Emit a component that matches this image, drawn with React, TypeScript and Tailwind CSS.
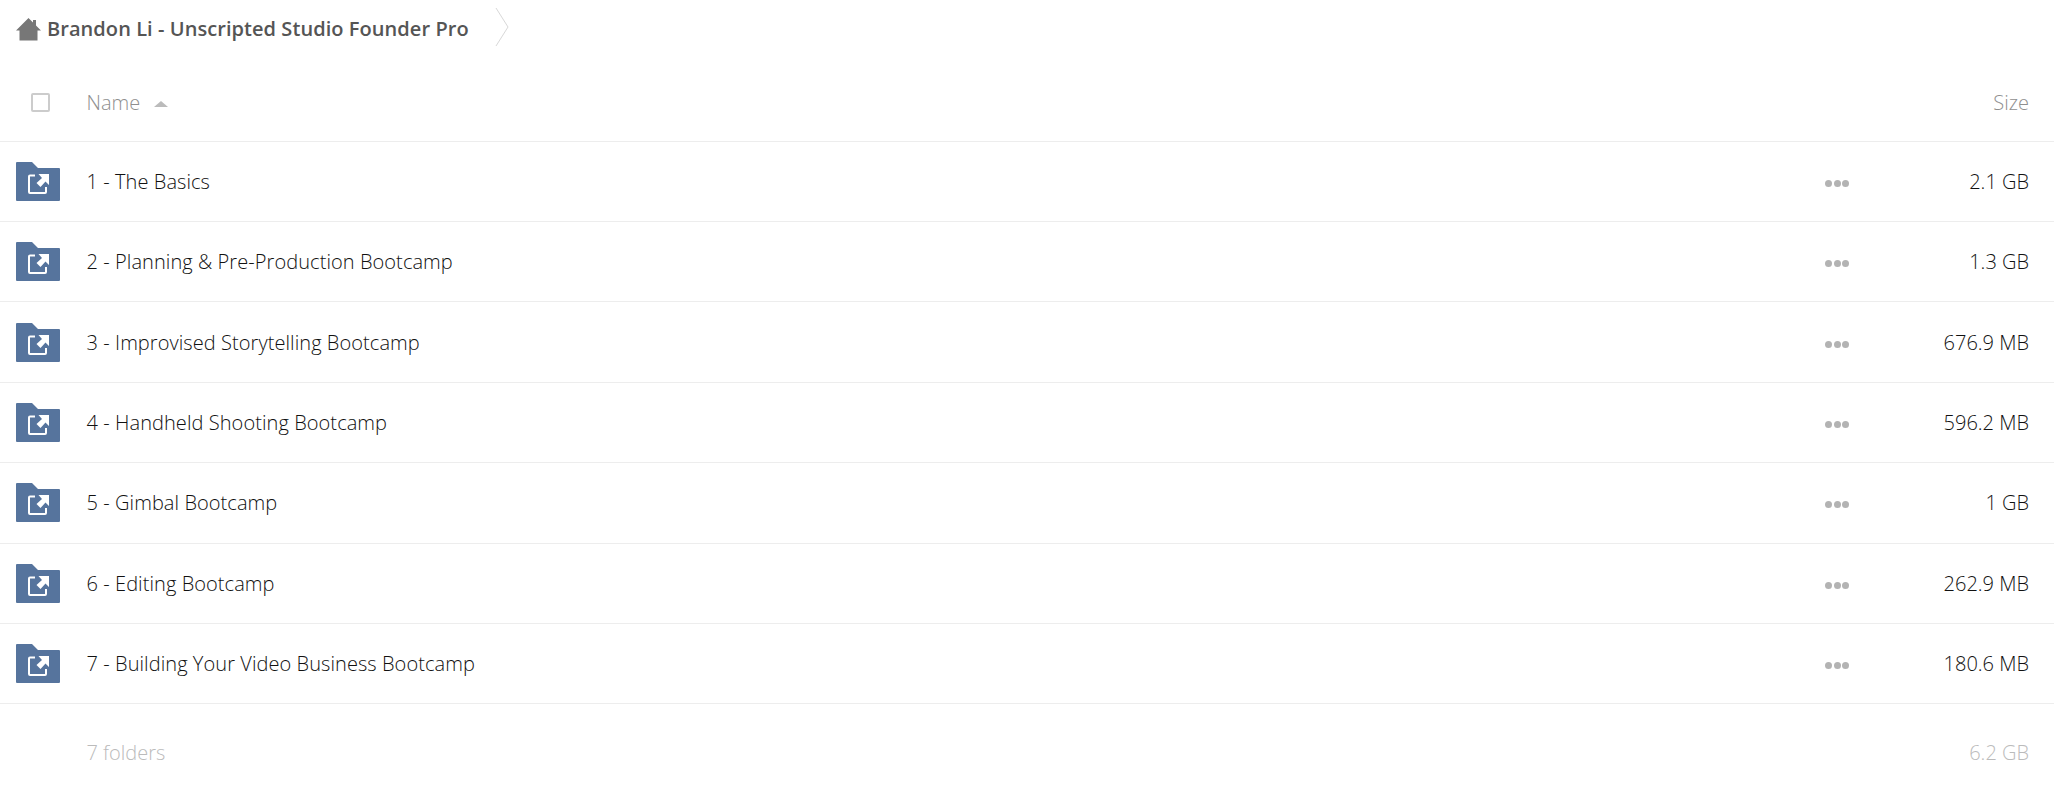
import React from 'react';

const folders = [
  { name: '1 - The Basics', size: '2.1 GB' },
  { name: '2 - Planning & Pre-Production Bootcamp', size: '1.3 GB' },
  { name: '3 - Improvised Storytelling Bootcamp', size: '676.9 MB' },
  { name: '4 - Handheld Shooting Bootcamp', size: '596.2 MB' },
  { name: '5 - Gimbal Bootcamp', size: '1 GB' },
  { name: '6 - Editing Bootcamp', size: '262.9 MB' },
  { name: '7 - Building Your Video Business Bootcamp', size: '180.6 MB' },
];

const SharedFolderIcon = () => (
  <svg width="44" height="39" viewBox="0 0 44 39" className="shrink-0">
    <path d="M1 0H16L22 6H43a1 1 0 0 1 1 1V38a1 1 0 0 1-1 1H1a1 1 0 0 1-1-1V1a1 1 0 0 1 1-1Z" fill="#56749d" />
    <path d="M19 13.500H14a1 1 0 0 0-1 1V30a1 1 0 0 0 1 1H29a1 1 0 0 0 1-1V25" fill="none" stroke="#fff" strokeWidth="2" />
    <path d="M33 12V23L29.500 19.500L24.500 25L20.500 21L26 16L22.500 12Z" fill="#fff" />
  </svg>
);

const App = () => {
  return (
    <div className="h-[801px] w-[2054px] overflow-hidden bg-white font-['Open_Sans',sans-serif] text-[20px] font-light">
      <div className="flex h-[60px] items-center pl-4">
        <svg width="25" height="23" viewBox="0 0 25 23" className="mr-[6px] -mt-[2px] shrink-0">
          <path d="M12.500 0L17 4.500V2H20V7.500L25 12.500H21.500V22.500H3.500V12.500H0Z" fill="#777" />
        </svg>
        <span className="-mt-[2px] text-[20px] font-semibold tracking-[0.06px] text-[#555]">Brandon Li - Unscripted Studio Founder Pro</span>
        <svg width="14" height="40" viewBox="0 0 14 40" className="ml-[26px] -mt-[6px] shrink-0">
          <path d="M1 1L13 20L1 39" fill="none" stroke="#d8d8d8" strokeWidth="1" />
        </svg>
      </div>

      <div className="flex h-[81.500px] items-center border-b border-[#ededed] pr-[25px] pt-[5px]">
        <div className="flex w-[86.500px] shrink-0 pl-[31px]">
          <div className="size-[19px] rounded-[2px] border-2 border-[#ccc]" />
        </div>
        <span className="text-[#8f8f8f]">Name</span>
        <span className="ml-[14px] mt-[2px] size-0 border-x-[7px] border-b-[6px] border-x-transparent border-b-[#bbb]" />
        <span className="ml-auto text-[#8f8f8f]">Size</span>
      </div>

      {folders.map((folder) => (
        <div key={folder.name} className="flex h-[80.430px] items-center border-b border-[#ededed] pl-4 pr-[25px] text-[#111]">
          <div className="w-[70.500px] shrink-0">
            <SharedFolderIcon />
          </div>
          <span className="pt-[1px] tracking-[0.07px]">{folder.name}</span>
          <div className="ml-auto flex w-[24px] gap-[1.500px] pt-[4px]">
            <span className="size-[7px] rounded-full bg-[#b3b3b3]" />
            <span className="size-[7px] rounded-full bg-[#b3b3b3]" />
            <span className="size-[7px] rounded-full bg-[#b3b3b3]" />
          </div>
          <span className="w-[180px] shrink-0 pt-[1px] text-right">{folder.size}</span>
        </div>
      ))}

      <div className="flex h-[97px] items-center pl-[86.500px] pr-[25px] text-[#bbb]">
        <span>7 folders</span>
        <span className="ml-auto">6.2 GB</span>
      </div>
    </div>
  );
};

export default App;
